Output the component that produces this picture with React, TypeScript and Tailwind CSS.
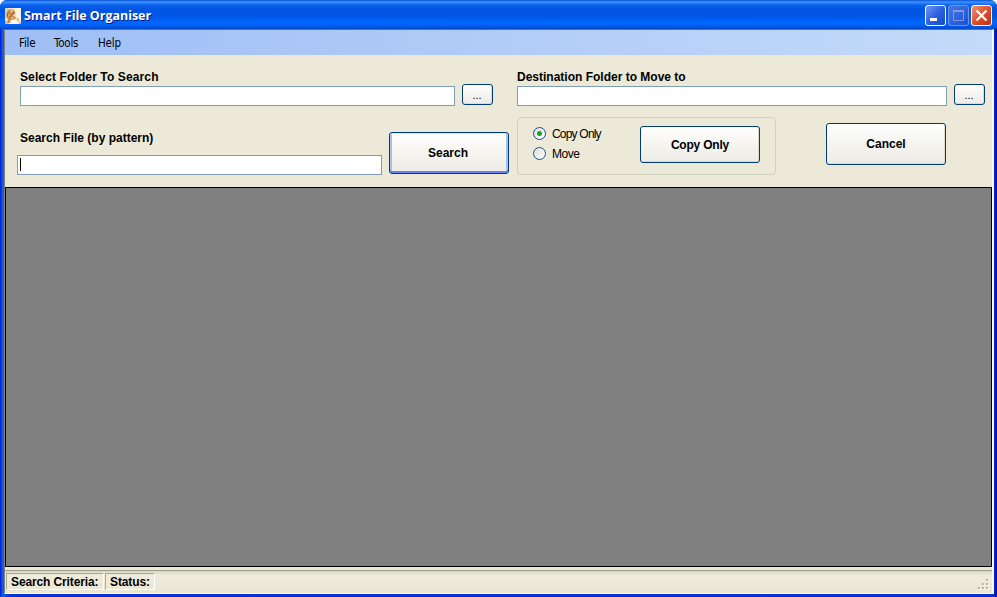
import React from "react";

const boldText = "font-['Liberation_Sans',Arial,sans-serif] text-[12px] leading-[14px] font-bold whitespace-nowrap";
const xpButton =
  "flex items-center justify-center rounded-[3px] border border-[#003c74] bg-linear-to-b from-white via-[#f5f4ef] to-[#ecebe5]";
const softEdge = "shadow-[inset_-1px_-1px_0_#dedbd2]";
const defaultEdge =
  "shadow-[inset_0_1px_0_#cee7ff,inset_0_-2px_0_#6982ee,inset_2px_0_0_#a4bff0,inset_-2px_0_0_#a4bff0]";
const field = "h-5 border border-[#7f9db9] bg-white";

function TitleBar() {
  return (
    <header className="flex h-[29px] shrink-0 items-center pl-[5px] pr-[5px] pt-[2px] [background-image:linear-gradient(#0c50d4_0,#3c94fc_2px,#0a62ef_5px,#0054df_10px,#0058e8_17px,#0066ff_22px,#0064fa_25px,#0047c5_29px)]">
      <svg width="16" height="16" viewBox="0 0 16 16" className="shrink-0">
        <rect width="16" height="16" fill="#f0e3c8" />
        <path d="M0 0h3v7H0z" fill="#e3cfa2" />
        <path d="M10 0h6v12h-4l-1-8z" fill="#fbf4e2" />
        <path d="M3 2l3-1 3 1 1 3-2 3 3 1-1 2-4 1-1 3H2l1-4-2-2 1-3z" fill="#c98b4c" />
        <path d="M5 2l2-1 1 2-2 2zM3 6l2 1-1 2zM6 9l3 0-1 1-2 1z" fill="#efc28a" />
        <path d="M3 4L2 8M7 6l-2 4M9 4v2" stroke="#96602f" fill="none" />
        <path d="M6 12h5l2 4H5z" fill="#fff9ea" />
        <path d="M0 13h3v3H0zM12 10h2v3h-2zM14 14h2v2h-2z" fill="#d9bc8c" />
      </svg>
      <h1 className="ml-[3px] font-['Open_Sans','Noto_Sans',sans-serif] text-[12.5px] leading-[18px] font-bold tracking-[-0.03px] whitespace-nowrap text-white [text-shadow:1px_1px_0_#0a1883]">
        Smart File Organiser
      </h1>
      <div className="ml-auto flex gap-[2px]">
        <button aria-label="Minimize" className="size-[21px] rounded-[3px] border border-white bg-linear-to-br from-[#7697ed] via-[#2b60e1] to-[#164bc7]">
          <svg width="19" height="19"><path d="M4 12h7v3H4z" fill="#fff" /></svg>
        </button>
        <button aria-label="Maximize" className="size-[21px] rounded-[3px] border border-[#6f91e8] bg-linear-to-br from-[#4777e4] to-[#1750d3]">
          <svg width="19" height="19"><path d="M4 4h11v2H4z" fill="#7f99e3" /><path d="M4.5 4.5h10v10h-10z" fill="none" stroke="#7f99e3" /></svg>
        </button>
        <button aria-label="Close" className="size-[21px] rounded-[3px] border border-white bg-linear-to-br from-[#ee9278] via-[#df4d26] to-[#bd3410]">
          <svg width="19" height="19"><path d="M4.5 4.5l10 10M14.5 4.5l-10 10" stroke="#fff" strokeWidth="2.3" /></svg>
        </button>
      </div>
    </header>
  );
}

function MenuBar() {
  return (
    <nav className="flex h-[25px] shrink-0 items-center bg-linear-to-r from-[#9ebef5] to-[#c4daf9] pt-[2px] pl-[14px] font-['DejaVu_Sans_Condensed','DejaVu_Sans',sans-serif] text-[11.5px] tracking-[-0.2px]">
      <span className="w-[35px]">File</span>
      <span className="w-11">Tools</span>
      <span>Help</span>
    </nav>
  );
}

function Radio({ label, checked, spacing }: { label: string; checked?: boolean; spacing: string }) {
  return (
    <label className="flex h-5 items-center gap-[6px] font-['Liberation_Sans',Arial,sans-serif] text-[12px] whitespace-nowrap">
      <span className="flex size-[13px] items-center justify-center rounded-full border border-[#21517f] bg-linear-to-br from-[#dcdcd7] to-white">
        {checked && <span className="size-[5px] rounded-full bg-[#21a121]" />}
      </span>
      <span className={`pt-px ${spacing}`}>{label}</span>
    </label>
  );
}

function SearchPanel() {
  return (
    <section className="w-[512px] shrink-0 pt-[15px] pl-[12px]">
      <div className={`${boldText} ml-[3px] tracking-[0.12px]`}>Select Folder To Search</div>
      <div className="ml-[3px] flex items-start">
        <div className={`${field} mt-[2px] w-[435px]`} />
        <button className={`${xpButton} ${softEdge} ml-[7px] h-[21px] w-[31px] pt-[2px] pr-px font-['Liberation_Sans'] text-[11px]`}>...</button>
      </div>
      <div className="mt-[25px] flex">
        <div className="w-[365px]">
          <div className={`${boldText} ml-[3px]`}>Search File (by pattern)</div>
          <div className={`${field} mt-[10px] pt-[2px] pl-[2px]`}>
            <div className="h-[13px] w-px bg-black" />
          </div>
        </div>
        <button className={`${xpButton} ${defaultEdge} ${boldText} ml-[7px] mt-px h-[42px] w-[120px] pr-[2px]`}>
          Search
        </button>
      </div>
    </section>
  );
}

function DestinationPanel() {
  return (
    <section className="w-[476px] pt-[15px]">
      <div className={boldText}>Destination Folder to Move to</div>
      <div className="flex items-start">
        <div className={`${field} mt-[2px] w-[430px]`} />
        <button className={`${xpButton} ${softEdge} ml-[7px] h-[21px] w-[31px] pt-[2px] pr-px font-['Liberation_Sans'] text-[11px]`}>...</button>
      </div>
      <div className="mt-[11px] flex items-start">
        <fieldset className="flex h-[58px] w-[259px] rounded-[4px] border border-[#d0d0bf] pt-[5px] pl-[15px]">
          <div className="w-[107px]">
            <Radio label="Copy Only" checked spacing="tracking-[-0.8px]" />
            <Radio label="Move" spacing="tracking-[-0.5px]" />
          </div>
          <button className={`${xpButton} ${softEdge} ${boldText} mt-[3px] h-[37px] w-[120px] tracking-[-0.2px]`}>Copy Only</button>
        </fieldset>
        <button className={`${xpButton} ${softEdge} ${boldText} ml-[50px] mt-[6px] h-[42px] w-[120px]`}>Cancel</button>
      </div>
    </section>
  );
}

function StatusBar() {
  const cell = `${boldText} h-[17px] border-t border-l border-[#aaa898] border-r border-b border-r-white border-b-white pt-px pl-1 tracking-[-0.12px]`;
  return (
    <footer className="mt-[3px] flex h-[23px] shrink-0 items-start border-t border-[#9f9d8c] bg-linear-to-b from-[#d8d5c4] from-0% via-[#efecdd] via-20% to-[#e9e6d5] pt-[2px] pl-px">
      <div className={`${cell} w-[98px]`}>Search Criteria:</div>
      <div className={`${cell} ml-[1px] w-[50px]`}>Status:</div>
      <svg width="12" height="12" className="mt-[6px] mr-[2px] ml-auto">
        <g fill="#fff"><path d="M9 1h2v2H9zM5 5h2v2H5zM9 5h2v2H9zM1 9h2v2H1zM5 9h2v2H5zM9 9h2v2H9z" /></g>
        <g fill="#b8b4a2"><path d="M8 0h2v2H8zM4 4h2v2H4zM8 4h2v2H8zM0 8h2v2H0zM4 8h2v2H4zM8 8h2v2H8z" /></g>
      </svg>
    </footer>
  );
}

export default function App() {
  return (
    <div className="h-[597px] w-[997px] bg-white text-black">
      <div className="flex h-full flex-col overflow-hidden rounded-t-[7px] bg-[#0831d9]">
        <TitleBar />
        <div className="flex min-h-0 flex-1 [background-image:linear-gradient(90deg,#0019cf_0,#0831d9_1px,#166aee_3px,#0855dd_4px,#0831d9_10px,#0831d9_994px,#001dca_995px,#00138c_997px)] pr-[3px] pl-1">
          <main className="mb-[3px] flex min-w-0 flex-1 flex-col border-t border-r-2 border-b border-l border-t-[#716f64] border-r-[#f8f7ed] border-b-white border-l-[#85816f] bg-[#ece9d8]">
            <MenuBar />
            <div className="flex h-[132px] shrink-0">
              <SearchPanel />
              <DestinationPanel />
            </div>
            <div className="h-[380px] shrink-0 border border-black bg-[#808080]" />
            <StatusBar />
          </main>
        </div>
      </div>
    </div>
  );
}
